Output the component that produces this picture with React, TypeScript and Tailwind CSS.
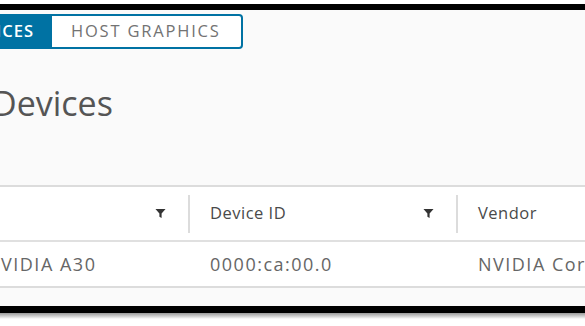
const font = { fontFamily: '"Open Sans", "Liberation Sans", sans-serif' }

function FilterIcon() {
  return (
    <svg width="11" height="11" viewBox="0 0 12 12" className="text-[#333]">
      <path d="M0.5 1h11L7.2 6v5L4.8 9.6V6z" fill="currentColor" />
    </svg>
  )
}

function HeaderCell({ label, width, filter }: { label?: string; width: string; filter?: boolean }) {
  return (
    <div className={`flex items-center h-full shrink-0 ${width}`}>
      <span className="flex-1 pl-5 text-[16.5px] tracking-[0.5px] text-[#4a4a4a]">{label}</span>
      {filter && (
        <span className="pr-[22px]">
          <FilterIcon />
        </span>
      )}
      {filter && <span className="w-[2px] h-[38px] bg-[#dcdcdc]" />}
    </div>
  )
}

export default function App() {
  return (
    <div className="w-[585px] h-[326px] bg-white overflow-hidden relative" style={font}>
      <div className="h-[4px] bg-white" />
      <div className="h-[6px] bg-black" />
      <div className="bg-[#fafafa] h-[296px] flex flex-col overflow-hidden">
        <div className="flex mt-[4px] h-[35px] -ml-[70px]">
          <div className="w-[122px] bg-[#0072a3] text-white text-[16.5px] font-semibold tracking-[1px] flex items-center justify-end pr-[18px] rounded-l-[3px] whitespace-nowrap">
            PCI DEVICES
          </div>
          <div className="w-[191px] border-2 border-[#0072a3] border-l-0 rounded-r-[4px] bg-white text-[16.5px] font-medium tracking-[1.8px] text-[#737373] flex items-center pl-[19px] whitespace-nowrap">
            HOST GRAPHICS
          </div>
        </div>
        <h1 className="mt-[35px] -ml-[8px] text-[34px] font-normal leading-[38px] text-[#555] whitespace-nowrap">Devices</h1>
        <div className="mt-[63px] bg-white border-y-2 border-[#dcdcdc]">
          <div className="h-[55px] flex items-center border-b-2 border-[#e0e0e0]">
            <HeaderCell width="w-[190px]" filter />
            <HeaderCell label="Device ID" width="w-[268px]" filter />
            <div className="flex-1 pl-5 text-[16.5px] tracking-[0.5px] text-[#4a4a4a] whitespace-nowrap">Vendor</div>
          </div>
          <div className="h-[44px] flex items-center text-[18px] tracking-[1.5px] text-[#666] whitespace-nowrap">
            <div className="w-[190px] shrink-0 overflow-hidden">
              <span className="block -ml-[14px]">NVIDIA A30</span>
            </div>
            <div className="w-[268px] shrink-0 pl-5">0000:ca:00.0</div>
            <div className="shrink-0 pl-5">NVIDIA Corporation</div>
          </div>
        </div>
      </div>
      <div className="h-[7px] bg-black" />
      <div className="h-[6px] bg-gradient-to-b from-[#9a9a9a] to-white" />
    </div>
  )
}
